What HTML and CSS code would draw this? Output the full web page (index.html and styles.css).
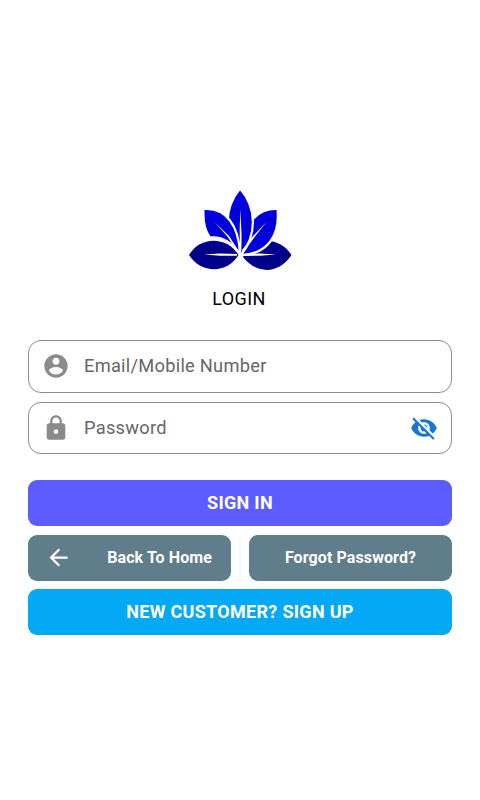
FILE: index.html
```html
<!DOCTYPE html>
<html lang="en">
<head>
  <meta charset="UTF-8" />
  <meta name="viewport" content="width=device-width, initial-scale=1.0"/>
  <title>Login</title>
  <link rel="stylesheet" href="styles.css">
</head>
<body>
  <form class="login">
    <svg class="logo" viewBox="0 0 120 100">
      <!-- bottom leaves -->
      <path fill="#00008b" d="M9 75C20 56 47 56 58.500 75C47 94 21 94 9 75Z"/>
      <path fill="#00008b" d="M63 77C72 57 99 55 111.500 75C99 94 77 95 63 77Z"/>
      <path class="vein" d="M24 74.500L40 73.400L57 74L57 75.800L40 75.700Z"/>
      <path class="vein" d="M63 74L80 73.400L96 74.500L80 75.700L63 76Z"/>
      <!-- upper leaves -->
      <path class="leaf" d="M97.500 29C100 54 89 74 61 75C60 55 71 28 97.500 29Z"/>
      <path class="leaf" d="M60 8.500C77 28 77 55 61 75C43 55 44 28 60 8.500Z"/>
      <path class="leaf" d="M23.500 29C46 27 59 46 60 74C53 64 43 56 30 57.500C24 50 23 39 23.500 29Z"/>
      <path class="vein" d="M60.300 29L61.600 55L61.300 73L59.900 73L59.700 50Z"/>
      <path class="vein" d="M34.500 42L49 56L60 73L57 71L47 56Z"/>
      <path class="vein" d="M86.500 42L75 56.500L63 73L62 70L73 56Z"/>
    </svg>
    <h1>LOGIN</h1>

    <label class="field">
      <svg class="icon" viewBox="0 0 24 24"><path fill-rule="evenodd" d="M12 2C6.480 2 2 6.480 2 12s4.480 10 10 10 10-4.480 10-10S17.520 2 12 2zm0 3c1.660 0 3 1.340 3 3s-1.340 3-3 3-3-1.340-3-3 1.340-3 3-3zm0 14.200c-2.500 0-4.710-1.280-6-3.220.03-1.990 4-3.080 6-3.080 1.990 0 5.970 1.090 6 3.080-1.290 1.940-3.500 3.220-6 3.220z"/></svg>
      <input type="text" placeholder="Email/Mobile Number">
    </label>
    <label class="field">
      <svg class="icon" viewBox="0 0 24 24"><path d="M18 8h-1V6c0-2.760-2.240-5-5-5S7 3.240 7 6v2H6c-1.100 0-2 .9-2 2v10c0 1.100.9 2 2 2h12c1.100 0 2-.9 2-2V10c0-1.100-.9-2-2-2zm-6 9c-1.100 0-2-.9-2-2s.9-2 2-2 2 .9 2 2-.9 2-2 2zm3.100-9H8.900V6c0-1.710 1.390-3.100 3.100-3.100s3.100 1.390 3.100 3.100v2z"/></svg>
      <input type="password" placeholder="Password">
      <svg class="icon eye" viewBox="0 0 24 24"><path d="M12 7c2.760 0 5 2.240 5 5 0 .65-.13 1.260-.36 1.830l2.920 2.920c1.510-1.260 2.700-2.890 3.430-4.750-1.730-4.390-6-7.500-11-7.500-1.400 0-2.740.25-3.980.7l2.160 2.160C10.740 7.130 11.350 7 12 7zM2 4.270l2.280 2.280.46.46C3.080 8.300 1.780 10.020 1 12c1.730 4.390 6 7.500 11 7.500 1.550 0 3.030-.3 4.380-.84l.42.42L19.730 22 21 20.730 3.270 3 2 4.270zM7.530 9.800l1.550 1.550c-.05.21-.08.43-.08.65 0 1.660 1.340 3 3 3 .22 0 .44-.03.65-.08l1.550 1.550c-.67.33-1.410.53-2.200.53-2.760 0-5-2.240-5-5 0-.79.2-1.530.53-2.200zm4.310-.78l3.150 3.150.02-.16c0-1.660-1.340-3-3-3l-.17.01z"/></svg>
    </label>

    <button type="button" class="btn signin">SIGN IN</button>
    <div class="row">
      <button type="button" class="btn small back">
        <svg class="arrow" viewBox="0 0 24 24"><path d="M20 11H7.830l5.590-5.590L12 4l-8 8 8 8 1.410-1.410L7.830 13H20v-2z"/></svg>
        <span>Back To Home</span>
      </button>
      <div class="divider"></div>
      <button type="button" class="btn small">Forgot Password?</button>
    </div>
    <button type="button" class="btn signup">NEW CUSTOMER? SIGN UP</button>
  </form>
</body>
</html>
```

FILE: styles.css
```css
* { box-sizing: border-box; }
body {
  margin: 0;
  font-family: Roboto, sans-serif;
  background: #fff;
}
.login {
  display: flex;
  flex-direction: column;
  padding: 180px 28px 0;
}
.logo {
  width: 120px;
  height: 100px;
  align-self: center;
}
.leaf {
  fill: #0000dc;
  stroke: #fff;
  stroke-width: 2.2;
}
.vein { fill: #fff; }
h1 {
  margin: 8px 2px 30px 0;
  font-size: 18px;
  font-weight: 400;
  line-height: 22px;
  letter-spacing: 0.4px;
  text-align: center;
  color: #000;
}
.field {
  display: flex;
  align-items: center;
  height: 52.5px;
  margin-bottom: 9px;
  padding: 0 13px 0 14px;
  border: 1px solid #8c8c8c;
  border-radius: 13px;
}
.icon {
  flex: none;
  width: 28px;
  height: 28px;
  margin-left: -1px;
  fill: #8b8b8b;
}
.eye { fill: #1976d2; }
.field input {
  flex: 1;
  min-width: 0;
  margin: 0 0 1px 14px;
  padding: 0;
  border: 0;
  outline: 0;
  background: none;
  font-family: inherit;
  font-size: 18.3px;
  letter-spacing: 0.25px;
}
.field input::placeholder { color: #666; }
.btn {
  height: 46px;
  padding: 0 0 1px;
  border: 0;
  border-radius: 9px;
  font-family: inherit;
  font-size: 18px;
  font-weight: 700;
  letter-spacing: 0.3px;
  color: #fff;
  cursor: pointer;
}
.signin {
  margin-top: 17px;
  background: #5c5cff;
}
.row {
  display: flex;
  justify-content: space-between;
  margin: 8.5px 0;
}
.small {
  width: 203px;
  padding-bottom: 0;
  font-size: 16px;
  letter-spacing: 0.1px;
  background: #607d8b;
}
.back {
  display: flex;
  align-items: center;
  justify-content: space-between;
  padding: 0 19px 0 17px;
}
.arrow {
  width: 27px;
  height: 27px;
  fill: #fff;
}
.divider {
  width: 2px;
  background: #f7f7f7;
}
.signup { background: #03a9f4; }
```
